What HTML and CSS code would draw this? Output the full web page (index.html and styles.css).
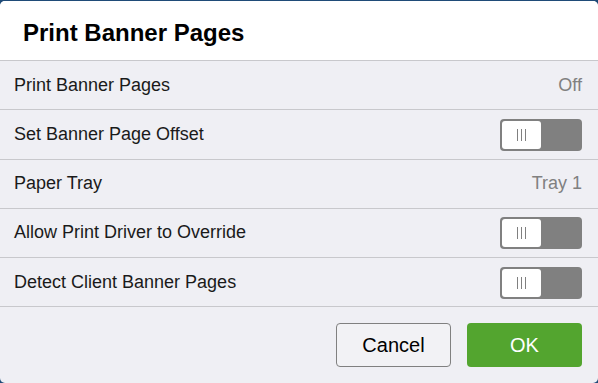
FILE: index.html
```html
<!DOCTYPE html>
<html lang="en">
<head>
    <meta charset="UTF-8">
    <meta name="viewport" content="width=device-width, initial-scale=1.0">
    <title>Print Banner Pages</title>
    <link rel="stylesheet" href="styles.css">
</head>
<body>

    <div class="dialog">
        <div class="dialog-header">
            <h1>Print Banner Pages</h1>
        </div>

        <div class="list">
            <div class="row">
                <span class="label">Print Banner Pages</span>
                <span class="value">Off</span>
            </div>
            <div class="row">
                <span class="label">Set Banner Page Offset</span>
                <span class="toggle"><span class="knob"><i></i><i></i><i></i></span></span>
            </div>
            <div class="row">
                <span class="label">Paper Tray</span>
                <span class="value">Tray 1</span>
            </div>
            <div class="row">
                <span class="label">Allow Print Driver to Override</span>
                <span class="toggle"><span class="knob"><i></i><i></i><i></i></span></span>
            </div>
            <div class="row">
                <span class="label">Detect Client Banner Pages</span>
                <span class="toggle"><span class="knob"><i></i><i></i><i></i></span></span>
            </div>
        </div>

        <div class="footer">
            <button class="btn btn-cancel">Cancel</button>
            <button class="btn btn-ok">OK</button>
        </div>
    </div>

</body>
</html>
```

FILE: styles.css
```css
body {
    font-family: 'Liberation Sans', Arial, sans-serif;
    background-color: #1f4b78;
    margin: 0;
    padding: 1px 0 0 0;
}

.dialog {
    width: 598px;
    height: 382px;
    background-color: #efeff4;
    border-radius: 5px;
    overflow: hidden;
    display: flex;
    flex-direction: column;
}

.dialog-header {
    background-color: #fff;
    height: 59px;
    border-bottom: 1px solid #c8c8cc;
    display: flex;
    align-items: center;
    padding-left: 23px;
}

.dialog-header h1 {
    margin: 0;
    font-size: 24px;
    font-weight: bold;
    color: #000;
    position: relative;
    top: 2px;
}

.row {
    height: 48.25px;
    border-bottom: 1px solid #c8c8cc;
    display: flex;
    align-items: center;
    justify-content: space-between;
    padding: 0 16px 0 14px;
}

.label {
    font-size: 18px;
    color: #1a1a1a;
}

.value {
    font-size: 18px;
    color: #808080;
}

.toggle {
    width: 82px;
    height: 32px;
    box-sizing: border-box;
    background-color: #808080;
    border-radius: 4px;
    padding: 2px;
    display: flex;
    margin-top: 1px;
}

.knob {
    width: 39px;
    height: 28px;
    background-color: #fff;
    border-radius: 3px;
    display: flex;
    justify-content: center;
    align-items: center;
    gap: 3px;
}

.knob i {
    width: 1px;
    height: 12px;
    background-color: #808080;
}

.footer {
    flex: 1;
    display: flex;
    justify-content: flex-end;
    align-items: flex-start;
    gap: 16px;
    padding: 16px 16px 0 0;
}

.btn {
    width: 115px;
    height: 44px;
    font-family: inherit;
    font-size: 20px;
    border-radius: 4px;
    cursor: pointer;
}

.btn-cancel {
    background-color: #f2f2f5;
    color: #000;
    border: 1px solid #808080;
}

.btn-ok {
    background-color: #53a52f;
    color: #fff;
    border: none;
}
```
